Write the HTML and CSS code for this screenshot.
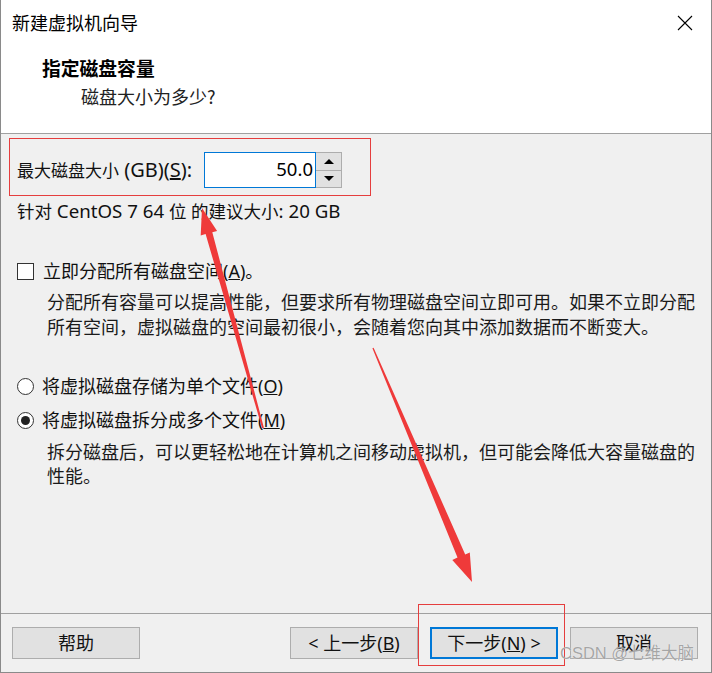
FILE: index.html
```html
<!DOCTYPE html>
<html lang="zh-CN">
<head>
<meta charset="utf-8">
<title>新建虚拟机向导</title>
<link rel="stylesheet" href="styles.css">
</head>
<body>
<div class="window">
  <header class="header">
    <div class="titlebar">
      <span class="title">新建虚拟机向导</span>
      <svg class="close" width="16" height="16" viewBox="0 0 16 16"><path d="M1 1 L15 15 M15 1 L1 15" stroke="#000" stroke-width="1.1" fill="none"/></svg>
    </div>
    <div class="heading">指定磁盘容量</div>
    <div class="subtitle">磁盘大小为多少?</div>
  </header>

  <main class="body">
    <div class="sizebox">
      <span class="label">最大磁盘大小<span class="lt"> (GB)(<u>S</u>):</span></span>
      <div class="spin">
        <div class="spin-input">50.0</div>
        <div class="spin-btns">
          <div class="spin-btn"><span class="tri-up"></span></div>
          <div class="spin-btn"><span class="tri-down"></span></div>
        </div>
      </div>
    </div>
    <div class="hint">针对<span class="lt"> CentOS 7 64 </span>位 的建议大小<span class="lt">: 20 GB</span></div>

    <label class="option check-row">
      <span class="checkbox"></span>
      <span>立即分配所有磁盘空间(<u>A</u>)。</span>
    </label>
    <p class="desc desc-a">分配所有容量可以提高性能，但要求所有物理磁盘空间立即可用。如果不立即分配所有空间，虚拟磁盘的空间最初很小，会随着您向其中添加数据而不断变大。</p>

    <label class="option radio-row first">
      <span class="radio"></span>
      <span>将虚拟磁盘存储为单个文件(<u>O</u>)</span>
    </label>
    <label class="option radio-row second">
      <span class="radio checked"></span>
      <span>将虚拟磁盘拆分成多个文件(<u>M</u>)</span>
    </label>
    <p class="desc desc-b">拆分磁盘后，可以更轻松地在计算机之间移动虚拟机，但可能会降低大容量磁盘的性能。</p>
  </main>

  <footer class="footer">
    <button class="btn">帮助</button>
    <div class="spacer"></div>
    <button class="btn">&lt; 上一步(<u>B</u>)</button>
    <button class="btn primary">下一步(<u>N</u>) &gt;</button>
    <button class="btn">取消</button>
  </footer>

  <div class="hl-box"></div>
  <div class="watermark">CSDN @七维大脑</div>

  <svg class="arrows" width="712" height="673" viewBox="0 0 712 673">
    <polygon fill="#ef3a3a" points="202,208 217.1,230.9 212.3,232.2 263.9,427.8 262.1,428.2 205.6,234.0 200.7,235.4"/>
    <polygon fill="#ef3a3a" points="472,582 469.8,552.5 465.2,554.4 373.6,347.7 372.4,348.3 457.5,557.6 452.3,559.9"/>
  </svg>
</div>
</body>
</html>
```

FILE: styles.css
```css
html, body {
  margin: 0;
  padding: 0;
  background: #f0f0f0;
}

.window {
  position: relative;
  width: 712px;
  height: 673px;
  box-sizing: border-box;
  border-left: 1px solid #8a8a8a;
  border-right: 1px solid #8a8a8a;
  border-bottom: 1px solid #8a8a8a;
  display: flex;
  flex-direction: column;
  background: #f0f0f0;
  font-family: "Noto Sans", "Noto Sans CJK SC", sans-serif;
  color: #111;
  overflow: hidden;
}

.header {
  height: 133px;
  background: #fff;
  border-bottom: 1px solid #a0a0a0;
  flex: none;
}

.titlebar {
  height: 44px;
  display: flex;
  align-items: center;
  justify-content: space-between;
  padding-left: 11px;
  padding-right: 18px;
}

.title {
  font-family: "Noto Sans CJK SC", sans-serif;
  font-size: 18px;
  color: #000;
}

.close {
  display: block;
  margin-top: 1px;
}

.heading {
  margin: 10px 0 0 41px;
  height: 28px;
  line-height: 28px;
  font-family: "Noto Sans CJK SC", sans-serif;
  font-weight: 700;
  font-size: 18.8px;
  color: #000;
}

.subtitle {
  margin-left: 80px;
  height: 28px;
  line-height: 28px;
  font-family: "Noto Sans CJK SC", sans-serif;
  font-size: 18px;
  color: #222;
}

.body {
  flex: 1;
  padding-top: 4px;
}

.sizebox {
  margin-left: 8px;
  width: 362px;
  height: 58px;
  box-sizing: border-box;
  border: 1px solid #e53e3e;
  display: flex;
  align-items: flex-start;
  padding: 13px 0 0 7px;
}

.label {
  width: 180px;
  flex: none;
  font-size: 17px;
  line-height: 36px;
  height: 36px;
  margin-right: 7px;
  white-space: nowrap;
}

.label .lt {
  font-size: 20px;
}

.hint .lt {
  font-size: 18.7px;
}

.spin {
  display: flex;
  height: 36px;
}

.spin-input {
  width: 112px;
  height: 36px;
  box-sizing: border-box;
  border: 1px solid #0078d7;
  background: #fff;
  text-align: right;
  padding-right: 2px;
  font-size: 18.5px;
  line-height: 32px;
  color: #000;
}

.spin-btns {
  width: 26px;
  height: 36px;
  box-sizing: border-box;
  border: 1px solid #adadad;
  border-left: none;
  display: flex;
  flex-direction: column;
  background: #e1e1e1;
}

.spin-btn {
  flex: 1;
  display: flex;
  align-items: center;
  justify-content: center;
}

.spin-btn + .spin-btn {
  border-top: 1px solid #adadad;
}

.tri-up {
  width: 0;
  height: 0;
  border-left: 5px solid transparent;
  border-right: 5px solid transparent;
  border-bottom: 5px solid #000;
}

.tri-down {
  width: 0;
  height: 0;
  border-left: 5px solid transparent;
  border-right: 5px solid transparent;
  border-top: 5px solid #000;
}

.hint {
  margin: 3px 0 0 16px;
  font-size: 17.5px;
  line-height: 24px;
  height: 24px;
  white-space: nowrap;
}

.option {
  display: flex;
  align-items: center;
  height: 24px;
  font-size: 18px;
  line-height: 24px;
  margin-left: 16px;
  white-space: nowrap;
}

.check-row {
  margin-top: 36px;
}

.checkbox {
  width: 17px;
  height: 17px;
  box-sizing: border-box;
  border: 1px solid #333;
  background: #fff;
  margin-right: 9px;
  flex: none;
}

.radio {
  width: 17px;
  height: 17px;
  box-sizing: border-box;
  border: 1px solid #333;
  border-radius: 50%;
  background: #fff;
  margin-right: 8px;
  flex: none;
  display: flex;
  align-items: center;
  justify-content: center;
}

.radio.checked::after {
  content: "";
  width: 9px;
  height: 9px;
  border-radius: 50%;
  background: #222;
}

.desc {
  margin: 0 0 0 46px;
  width: 650px;
  font-family: "Noto Sans CJK SC", sans-serif;
  font-size: 18px;
  color: #1a1a1a;
}

.desc-a {
  margin-top: 6px;
  line-height: 25px;
}

.radio-row.first {
  margin-top: 35px;
}

.radio-row.second {
  margin-top: 10px;
}

.desc-b {
  margin-top: 7px;
  line-height: 24px;
}

.footer {
  flex: none;
  height: 59px;
  box-sizing: border-box;
  border-top: 1px solid #a0a0a0;
  padding: 13px 13px 13px 11px;
  display: flex;
  align-items: flex-start;
  gap: 12px;
}

.spacer {
  flex: 1;
}

.btn {
  width: 128px;
  height: 32px;
  box-sizing: border-box;
  border: 1px solid #adadad;
  background: #e1e1e1;
  font-family: "Noto Sans", "Noto Sans CJK SC", sans-serif;
  font-size: 18px;
  color: #111;
  padding: 0;
  line-height: 28px;
}

.btn.primary {
  border: 2px solid #0078d7;
}

.hl-box {
  position: absolute;
  left: 417px;
  top: 604px;
  width: 147px;
  height: 62px;
  box-sizing: border-box;
  border: 1px solid #e53e3e;
  pointer-events: none;
}

.watermark {
  position: absolute;
  left: 559px;
  top: 641px;
  font-family: "Liberation Sans", "Noto Sans CJK SC", sans-serif;
  font-size: 16.5px;
  line-height: 24px;
  color: rgba(150, 150, 150, 0.85);
  text-shadow: 0 0 1px rgba(255, 255, 255, 0.9);
  white-space: nowrap;
  pointer-events: none;
}

.arrows {
  position: absolute;
  left: -1px;
  top: 0;
  pointer-events: none;
}
```
